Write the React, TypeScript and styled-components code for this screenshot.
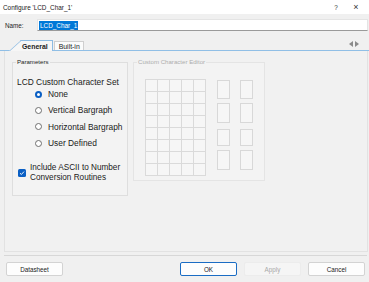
import React from "react";
import styled, { createGlobalStyle, css } from "styled-components";

const Global = createGlobalStyle`
  html, body { margin: 0; padding: 0; background: #f0f0f0; }
  body { font-family: "Liberation Sans", Arial, sans-serif; color: #1a1a1a; }
  * { box-sizing: border-box; }
`;

const Window = styled.div`
  width: 369px;
  height: 282px;
  display: flex;
  flex-direction: column;
  background: #f0f0f0;
  overflow: hidden;
`;

const TitleBar = styled.div`
  height: 14px;
  background: #ffffff;
  display: flex;
  align-items: center;
  padding-left: 3px;
  font-size: 6.4px;
  color: #222;
`;

const Title = styled.span`
  flex: 1;
`;

const TitleButton = styled.span<{ $w: number; $size?: number }>`
  width: ${(p) => p.$w}px;
  display: flex;
  justify-content: center;
  align-items: center;
  color: #333;
  font-size: ${(p) => p.$size ?? 6.4}px;
`;

const NameRow = styled.div`
  height: 22px;
  display: flex;
  align-items: center;
  padding: 0 1px 0 5px;
`;

const NameLabel = styled.label`
  width: 32px;
  font-size: 6.3px;
  color: #222;
`;

const NameInput = styled.div`
  flex: 1;
  height: 12px;
  background: #ffffff;
  border: 1px solid #e4e4e4;
  border-bottom: 1px solid #9a9a9a;
  display: flex;
  align-items: center;
  padding-left: 1px;
`;

const Selected = styled.span`
  background: #0078d7;
  color: #ffffff;
  font-size: 6.4px;
  line-height: 9px;
  padding: 0 1px;
`;

const TabStrip = styled.div`
  height: 15px;
  display: flex;
  align-items: flex-end;
  border-bottom: 1px solid #90bfe6;
  padding: 0 10px 0 9px;
`;

const Tab = styled.div<{ $active?: boolean }>`
  position: relative;
  font-size: 6.9px;
  display: flex;
  align-items: center;
  margin-bottom: -1px;
  ${(p) =>
    p.$active
      ? css`
          height: 11px;
          margin-left: 11px;
          padding: 0 4px 0 2px;
          font-weight: bold;
          background: #f6f6f6;
          border-top: 1px solid #8dbbe2;
          border-right: 1px solid #8dbbe2;
          z-index: 1;
          &::before {
            content: "";
            position: absolute;
            left: -11px;
            top: -1px;
            bottom: 0;
            width: 14px;
            background: #f6f6f6;
            border-left: 1px solid #8dbbe2;
            border-top: 1px solid #8dbbe2;
            transform: skewX(-48deg);
            transform-origin: bottom left;
            z-index: -1;
          }
        `
      : css`
          height: 9px;
          margin-left: 1px;
          padding: 0 3px 0 4px;
          background: #fbfbfb;
          border: 1px solid #cfcfcf;
          border-bottom: none;
          margin-bottom: 0;
        `}
`;

const Spacer = styled.div`
  flex: 1;
`;

const Arrows = styled.div`
  display: flex;
  gap: 2px;
  align-self: center;
  margin-top: 2px;
`;

const Panel = styled.div`
  margin: 0 1px 0 4px;
  height: 201px;
  border: 1px solid #e2e2e2;
  border-top: none;
  background: #f1f1f1;
  display: flex;
  align-items: flex-start;
  gap: 5px;
  padding: 7px 7px 0 7px;
`;

const Group = styled.fieldset<{ $w: number; $h: number; $disabled?: boolean }>`
  margin: 0;
  width: ${(p) => p.$w}px;
  height: ${(p) => p.$h}px;
  border: 1px solid ${(p) => (p.$disabled ? "#e4e4e4" : "#dedede")};
  background: #f3f3f3;
  padding: 0;
`;

const Legend = styled.legend<{ $disabled?: boolean }>`
  font-size: 6.1px;
  line-height: 8px;
  padding: 0 1px;
  margin-left: 3px;
  color: ${(p) => (p.$disabled ? "#adadad" : "#222")};
`;

const ParamBody = styled.div`
  display: flex;
  flex-direction: column;
  padding: 11px 0 0 4px;
`;

const SetLabel = styled.div`
  font-size: 8.4px;
  line-height: 10px;
  margin-bottom: -1px;
`;

const RadioList = styled.div`
  display: flex;
  flex-direction: column;
  padding-left: 18px;
`;

const RadioRow = styled.div`
  height: 16.3px;
  display: flex;
  align-items: center;
  gap: 6px;
  font-size: 8.4px;
`;

const RadioDot = styled.span<{ $on?: boolean }>`
  width: 7px;
  height: 7px;
  border-radius: 50%;
  flex: none;
  background: #ffffff;
  ${(p) =>
    p.$on
      ? css`
          border: 2px solid #0a5fc4;
        `
      : css`
          border: 1px solid #6f6f6f;
        `}
`;

const CheckRow = styled.div`
  display: flex;
  align-items: center;
  gap: 4px;
  margin-top: 12px;
  padding-left: 1px;
`;

const CheckBox = styled.span`
  width: 8px;
  height: 8px;
  border-radius: 1.5px;
  background: #0a5fc4;
  flex: none;
  display: flex;
  align-items: center;
  justify-content: center;
`;

const CheckText = styled.div`
  font-size: 8.2px;
  line-height: 10px;
`;

const EditorBody = styled.div`
  display: flex;
  gap: 11px;
  padding: 13px 0 0 11px;
`;

const PixelGrid = styled.div`
  display: grid;
  grid-template-columns: repeat(5, 12px);
  grid-template-rows: repeat(8, 12px);
  border-top: 1px solid #dadada;
  border-left: 1px solid #dadada;
`;

const Pixel = styled.div`
  border-right: 1px solid #dadada;
  border-bottom: 1px solid #dadada;
  background: #f6f6f6;
`;

const SlotGrid = styled.div`
  display: grid;
  grid-template-columns: repeat(2, 13px);
  column-gap: 10px;
  grid-template-rows: 19px 20px 19px 20px;
  row-gap: 4px;
  padding-top: 1px;
  & > :nth-child(5),
  & > :nth-child(6) {
    margin-top: 2px;
  }
`;

const Slot = styled.div`
  border: 1px solid #d8d8d8;
  background: #f6f6f6;
`;

const Separator = styled.div`
  height: 1px;
  margin: 3px 2px 0 4px;
  background: #d7d7d7;
`;

const ButtonRow = styled.div`
  display: flex;
  gap: 7px;
  padding: 6px 4px 0 6px;
`;

const Button = styled.button<{ $primary?: boolean; $disabled?: boolean }>`
  width: 57px;
  height: 14px;
  padding: 0;
  font-family: "Liberation Sans", Arial, sans-serif;
  font-size: 6.3px;
  color: #222;
  background: #fdfdfd;
  border: 1px solid #d3d3d3;
  border-radius: 2px;
  ${(p) =>
    p.$primary &&
    css`
      border-color: #1a6cc4;
    `}
  ${(p) =>
    p.$disabled &&
    css`
      background: #f5f5f5;
      border-color: #ececec;
      color: #a8a8a8;
    `}
`;

const radios = ["None", "Vertical Bargraph", "Horizontal Bargraph", "User Defined"];

export default function App() {
  return (
    <>
      <Global />
      <Window>
        <TitleBar>
          <Title>Configure 'LCD_Char_1'</Title>
          <TitleButton $w={14}>?</TitleButton>
          <TitleButton $w={26} $size={9}>
            ×
          </TitleButton>
        </TitleBar>
        <NameRow>
          <NameLabel>Name:</NameLabel>
          <NameInput>
            <Selected>LCD_Char_1</Selected>
          </NameInput>
        </NameRow>
        <TabStrip>
          <Tab $active>General</Tab>
          <Tab>Built-in</Tab>
          <Spacer />
          <Arrows>
            <svg width="4" height="6" viewBox="0 0 4 6">
              <path d="M4 0 L0 3 L4 6 Z" fill="#8a8a8a" />
            </svg>
            <svg width="4" height="6" viewBox="0 0 4 6">
              <path d="M0 0 L4 3 L0 6 Z" fill="#8a8a8a" />
            </svg>
          </Arrows>
        </TabStrip>
        <Panel>
          <Group $w={116} $h={138}>
            <Legend>Parameters</Legend>
            <ParamBody>
              <SetLabel>LCD Custom Character Set</SetLabel>
              <RadioList>
                {radios.map((r, i) => (
                  <RadioRow key={r}>
                    <RadioDot $on={i === 0} />
                    {r}
                  </RadioRow>
                ))}
              </RadioList>
              <CheckRow>
                <CheckBox>
                  <svg width="6" height="6" viewBox="0 0 6 6">
                    <path d="M1 3.2 L2.4 4.5 L5 1.6" fill="none" stroke="#ffffff" strokeWidth="0.9" />
                  </svg>
                </CheckBox>
                <CheckText>
                  Include ASCII to Number
                  <br />
                  Conversion Routines
                </CheckText>
              </CheckRow>
            </ParamBody>
          </Group>
          <Group $w={132} $h={123} $disabled>
            <Legend $disabled>Custom Character Editor</Legend>
            <EditorBody>
              <PixelGrid>
                {Array.from({ length: 40 }).map((_, i) => (
                  <Pixel key={i} />
                ))}
              </PixelGrid>
              <SlotGrid>
                {Array.from({ length: 8 }).map((_, i) => (
                  <Slot key={i} />
                ))}
              </SlotGrid>
            </EditorBody>
          </Group>
        </Panel>
        <Separator />
        <ButtonRow>
          <Button>Datasheet</Button>
          <Spacer />
          <Button $primary>OK</Button>
          <Button $disabled>Apply</Button>
          <Button>Cancel</Button>
        </ButtonRow>
      </Window>
    </>
  );
}
